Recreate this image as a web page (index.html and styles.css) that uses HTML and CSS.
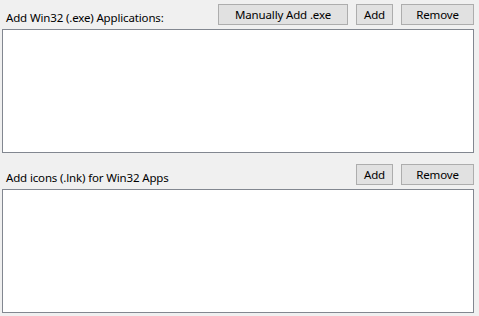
FILE: index.html
```html
<!DOCTYPE html>
<html>
<head>
    <title>Win32 Applications</title>
    <link rel="stylesheet" href="styles.css">
</head>
<body>
    <div class="panel">
        <div class="section">
            <div class="section-head">
                <label class="section-label">Add Win32 (.exe) Applications:</label>
                <div class="btn-row">
                    <button class="btn btn-wide">Manually Add .exe</button>
                    <button class="btn btn-add">Add</button>
                    <button class="btn btn-remove">Remove</button>
                </div>
            </div>
            <div class="listbox"></div>
        </div>

        <div class="section section-second">
            <div class="section-head">
                <label class="section-label">Add icons (.lnk) for Win32 Apps</label>
                <div class="btn-row">
                    <button class="btn btn-add">Add</button>
                    <button class="btn btn-remove">Remove</button>
                </div>
            </div>
            <div class="listbox"></div>
        </div>
    </div>
</body>
</html>
```

FILE: styles.css
```css
body {
    margin: 0;
    padding: 0;
    background-color: #f0f0f0;
    font-family: "Noto Sans", "DejaVu Sans", sans-serif;
    font-size: 11.5px;
    letter-spacing: -0.15px;
    color: #000;
}

.panel {
    width: 472px;
    padding: 4px 0 0 2px;
}

.section-head {
    display: flex;
    justify-content: space-between;
    align-items: flex-end;
    height: 25px;
}

.section-label {
    padding-left: 4px;
    padding-bottom: 3px;
    line-height: 16px;
}

.btn-row {
    display: flex;
    gap: 8px;
    align-self: flex-start;
}

.btn {
    height: 21px;
    padding: 0;
    margin: 0;
    border: 1px solid #adadad;
    background-color: #e1e1e1;
    font-family: "Noto Sans", "DejaVu Sans", sans-serif;
    font-size: 11.5px;
    letter-spacing: -0.15px;
    color: #000;
    line-height: 17px;
}

.btn-wide {
    width: 130px;
}

.btn-add {
    width: 37px;
}

.btn-remove {
    width: 73px;
}

.listbox {
    height: 122px;
    border: 1px solid #828790;
    background-color: #fff;
}

.section-second {
    margin-top: 11px;
}
```
